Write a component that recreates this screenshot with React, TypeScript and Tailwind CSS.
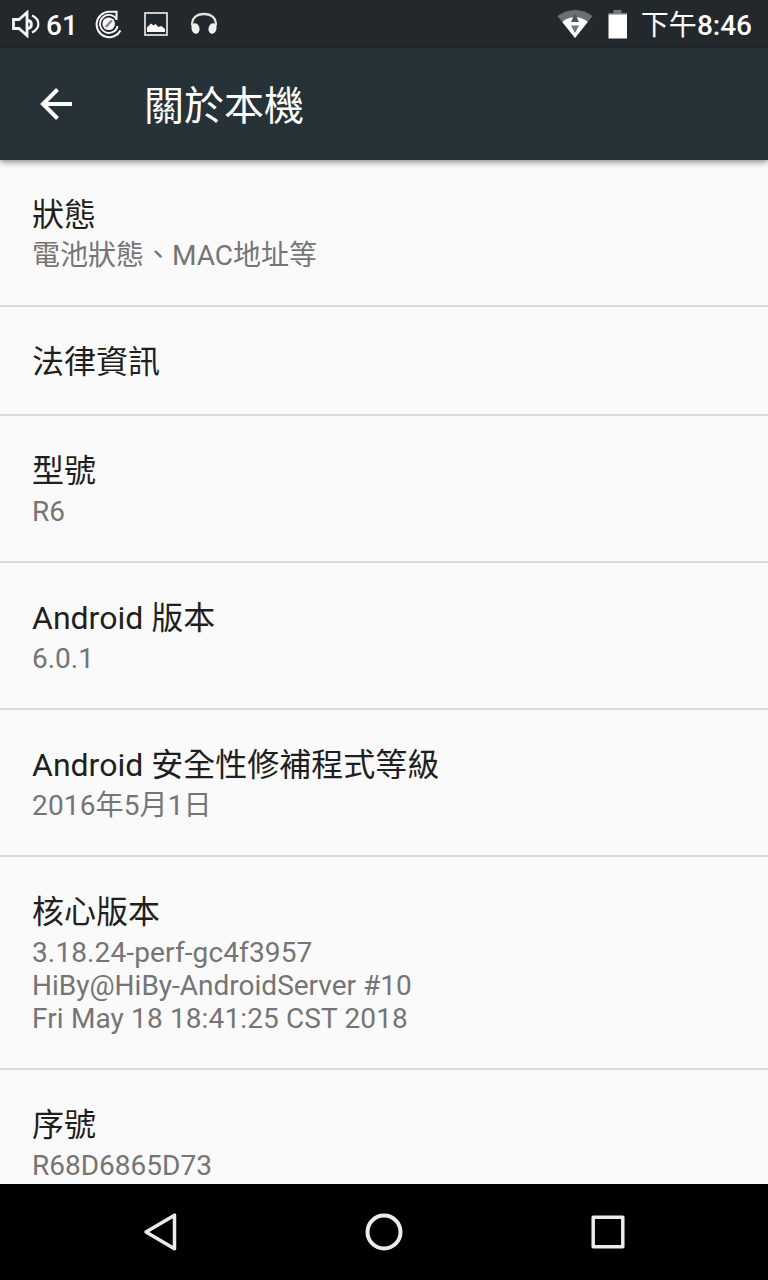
const settings = [
  { title: '狀態', summary: ['電池狀態、MAC地址等'] },
  { title: '法律資訊', summary: [] },
  { title: '型號', summary: ['R6'] },
  { title: 'Android 版本', summary: ['6.0.1'] },
  { title: 'Android 安全性修補程式等級', summary: ['2016年5月1日'], tracking: 'tracking-[0.15px]' },
  {
    title: '核心版本',
    summary: ['3.18.24-perf-gc4f3957', 'HiBy@HiBy-AndroidServer #10', 'Fri May 18 18:41:25 CST 2018'],
  },
  { title: '序號', summary: ['R68D6865D73'] },
];

function VolumeIcon() {
  return (
    <svg className="h-7 w-7 shrink-0" viewBox="0 0 28 28" fill="none" stroke="#f4f5f5" strokeWidth="2.8">
      <path d="M1.500 9.500h5.500L15 2.500v23L7 18.500H1.500z" />
      <path d="M16 10.500c4.500 .5 4.500 7.500 0 8" strokeWidth="2.800" />
      <path d="M20 5.500c8.500 4 8.500 13 0 17" strokeWidth="2.200" />
    </svg>
  );
}

function HibyIcon() {
  return (
    <svg className="h-[30px] w-[30px] shrink-0" viewBox="0 0 30 30" fill="none" stroke="#f4f5f5" strokeWidth="2.100">
      <path d="M22.500 11V2.800H15A12.700 12.700 0 1 0 26.500 21.500" />
      <path d="M22.500 10A9 9 0 1 0 18.500 23.200C21.500 22 23 20 23.500 17" strokeWidth="1.900" />
      <circle cx="14.700" cy="14.800" r="6.300" fill="#f4f5f5" stroke="none" />
      <path d="M11.800 18l6-6.500" stroke="#858889" strokeWidth="2.400" />
    </svg>
  );
}

function PictureIcon() {
  return (
    <svg className="h-6 w-6 shrink-0" viewBox="0 0 24 24">
      <rect x="1" y="1" width="22" height="22" fill="none" stroke="#e4e6e7" strokeWidth="1.700" />
      <path d="M3 20v-4.500L7 11.500l2.500 2L11.500 12l3 3 3-1 3.500 3v3z" fill="#fff" />
    </svg>
  );
}

function HeadphonesIcon() {
  return (
    <svg className="h-6 w-7 shrink-0" viewBox="0 0 28 24" fill="none" stroke="#dfe1e1">
      <path d="M2.500 14C.5 6.500 7 2 14 2s13.500 4.500 11.500 12" strokeWidth="2.300" />
      <ellipse cx="5.500" cy="16.500" rx="4" ry="5.300" transform="rotate(-12 5.500 16.500)" fill="#efefef" stroke="none" />
      <ellipse cx="22.500" cy="16.500" rx="4" ry="5.300" transform="rotate(12 22.500 16.500)" fill="#efefef" stroke="none" />
    </svg>
  );
}

function WifiIcon() {
  return (
    <svg className="h-7 w-9 shrink-0" viewBox="0 0 36 28">
      <path d="M0.500 6C10.500 -2 25.500 -2 35.500 6L18 28z" fill="#6b6f71" />
      <path d="M5.300 12C11 5.700 25 5.700 30.700 12L18 28z" fill="#fff" />
      <path d="M18 3.500l4 8.500h-8z" fill="#505456" />
      <path d="M18 23l4-7.500h-8z" fill="#74787a" />
    </svg>
  );
}

function BatteryIcon() {
  return (
    <svg className="h-[29px] w-5 shrink-0" viewBox="0 0 20 29">
      <path d="M5.500 0h8v3h-8zM.5 3H19v2H.5z" fill="#777b7d" />
      <path d="M.5 4.500H19V28.500H.5z" fill="#fff" />
    </svg>
  );
}

function StatusBar() {
  return (
    <div className="flex h-12 shrink-0 items-center bg-[#23282c] text-[28px] leading-none font-medium text-white">
      <div className="flex items-center pl-3">
        <VolumeIcon />
        <span className="ml-[6px] w-[48px] pt-[4px]">61</span>
        <HibyIcon />
        <span className="w-5" />
        <PictureIcon />
        <span className="w-[22px]" />
        <HeadphonesIcon />
      </div>
      <div className="ml-auto flex items-center pr-4">
        <WifiIcon />
        <span className="w-[15px]" />
        <BatteryIcon />
        <span className="ml-[13px] pt-[4px] whitespace-nowrap">
          <span className="font-normal">下午</span>8:46
        </span>
      </div>
    </div>
  );
}

function Toolbar() {
  return (
    <header className="relative z-10 flex h-28 shrink-0 items-center bg-[#273238] pl-10 text-white shadow-[0_2px_6px_rgba(0,0,0,0.45)]">
      <svg className="h-8 w-8 shrink-0" viewBox="0 0 32 32" fill="none" stroke="currentColor" strokeWidth="4">
        <path d="M32 16H3M17.500 1.500L3 16l14.500 14.500" />
      </svg>
      <h1 className="ml-[72px] pt-[5px] text-[40px] leading-none">關於本機</h1>
    </header>
  );
}

function SettingRow({ title, summary, tracking }: { title: string; summary: string[]; tracking?: string }) {
  return (
    <li className="shrink-0 border-b-2 border-[#dadada] px-8 pt-9 pb-[33px]">
      <div className="h-[38px] text-[32px] leading-[38px] whitespace-nowrap text-[#1f1f1f]">{title}</div>
      {summary.length > 0 && (
        <div className={`mt-[5px] text-[28px] leading-[33px] whitespace-nowrap text-[#757575] ${tracking ?? ''}`}>
          {summary.map((line) => (
            <div key={line} className={`h-[33px] ${/\d[.:]\d{2}/.test(line) ? 'tracking-[0.13px]' : ''}`}>
              {line}
            </div>
          ))}
        </div>
      )}
    </li>
  );
}

function NavigationBar() {
  return (
    <nav className="flex h-24 shrink-0 items-center justify-center gap-[184px] bg-black">
      <svg className="h-10 w-10" viewBox="0 0 40 40" fill="none" stroke="#ececec" strokeWidth="3.500" strokeLinejoin="round">
        <path d="M34.500 3.200v33.600L6 20z" />
      </svg>
      <svg className="h-10 w-10" viewBox="0 0 40 40" fill="none" stroke="#ececec" strokeWidth="4">
        <circle cx="20" cy="20" r="16.500" />
      </svg>
      <svg className="h-10 w-10" viewBox="0 0 40 40" fill="none" stroke="#ececec" strokeWidth="3.500" strokeLinejoin="round">
        <rect x="5.200" y="5.200" width="29.600" height="29.600" />
      </svg>
    </nav>
  );
}

export default function App() {
  return (
    <div className="flex h-[1280px] w-[768px] flex-col overflow-hidden bg-[#fafafa] font-['Roboto','Noto_Sans_CJK_TC',sans-serif]">
      <StatusBar />
      <Toolbar />
      <ul className="flex min-h-0 flex-1 flex-col overflow-hidden">
        {settings.map((item) => (
          <SettingRow key={item.title} {...item} />
        ))}
      </ul>
      <NavigationBar />
    </div>
  );
}
